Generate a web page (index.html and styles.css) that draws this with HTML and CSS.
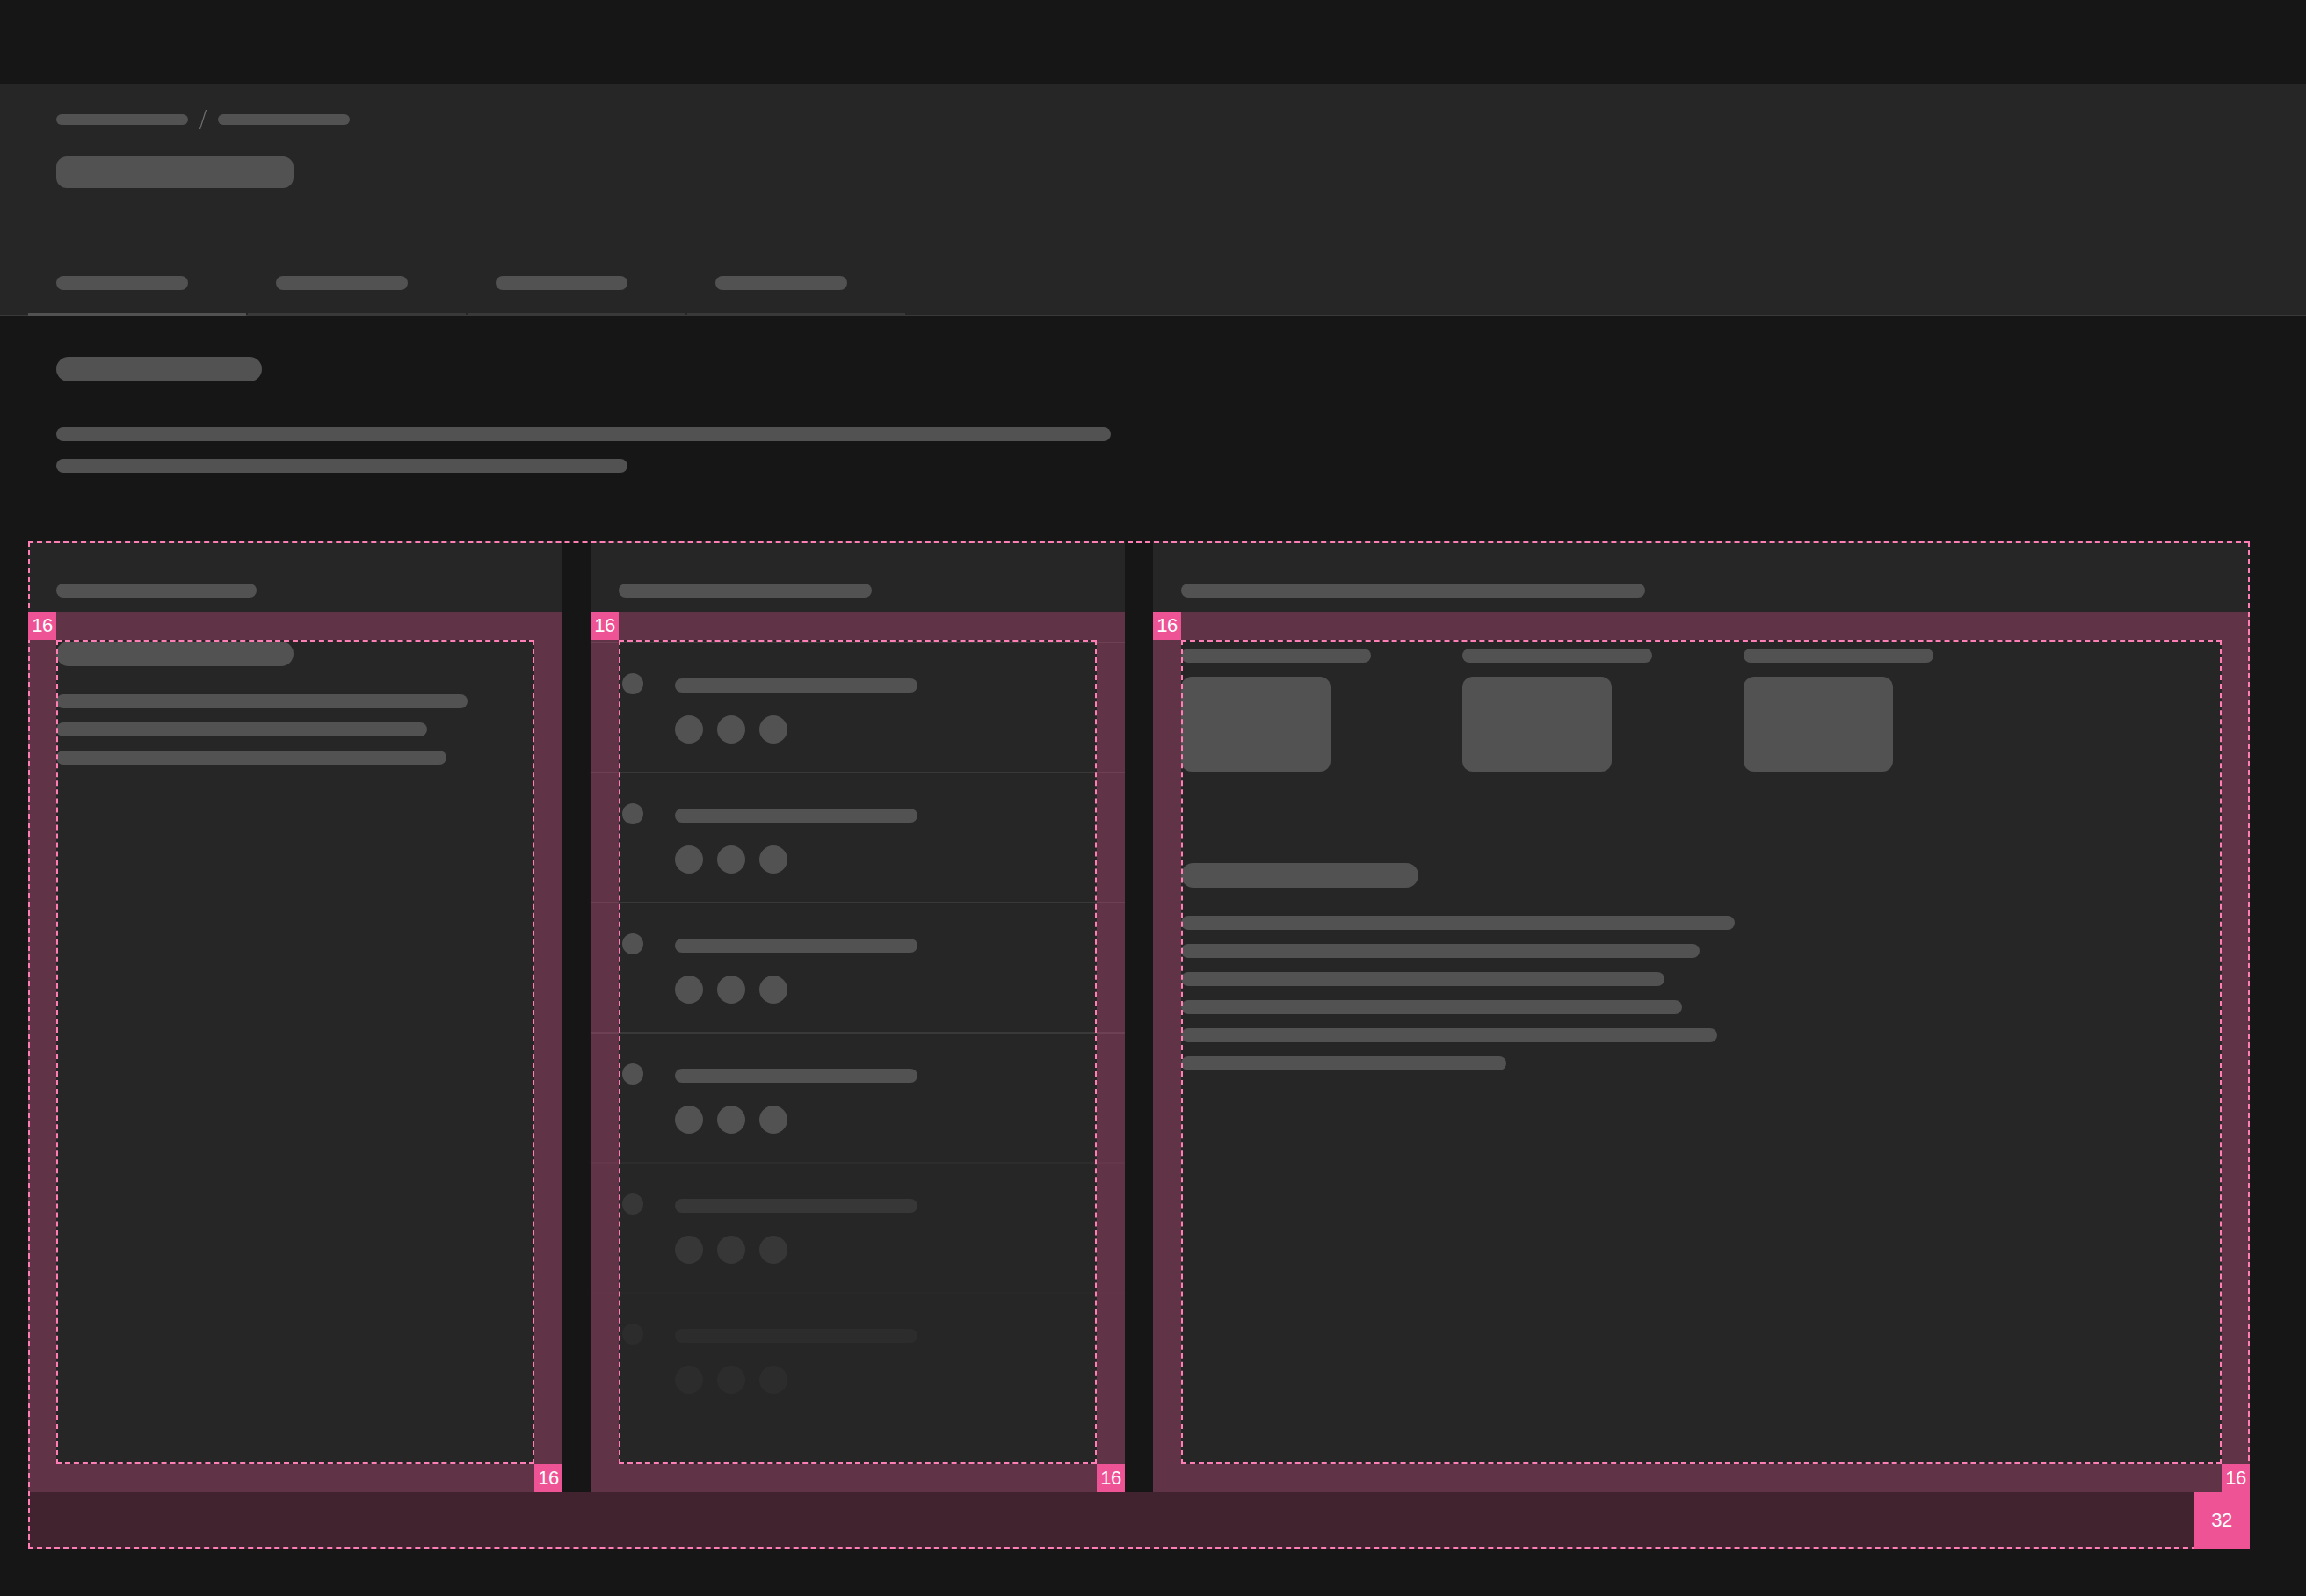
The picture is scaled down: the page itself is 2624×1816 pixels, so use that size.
FILE: index.html
```html
<!DOCTYPE html>
<html lang="en">
<head>
<meta charset="utf-8">
<title>Layout spacing</title>
<link rel="stylesheet" href="styles.css">
</head>
<body>
<div class="topbar"></div>
<header class="page-header">
  <nav class="crumbs">
    <span class="sk sk-crumb"></span>
    <svg class="slash" width="8" height="22" viewBox="0 0 8 22"><line x1="7.5" y1="0" x2="0.5" y2="22" stroke="#6f6f6f" stroke-width="1.2"/></svg>
    <span class="sk sk-crumb"></span>
  </nav>
  <div class="sk sk-page-title"></div>
  <div class="tabs">
    <div class="tab active"><span class="sk sk-tab"></span></div>
    <div class="tab"><span class="sk sk-tab"></span></div>
    <div class="tab"><span class="sk sk-tab"></span></div>
    <div class="tab"><span class="sk sk-tab"></span></div>
  </div>
</header>
<main class="main">
  <section class="intro">
    <div class="sk sk-h2"></div>
    <div class="sk sk-line w1200 intro-first"></div>
    <div class="sk sk-line w650 intro-second"></div>
  </section>

  <section class="layout">
    <div class="panel">
      <div class="panel-head"><span class="sk sk-head w228"></span></div>
      <div class="panel-body">
        <div class="sk sk-h3 first-title"></div>
        <div class="lines">
          <div class="sk sk-line w468"></div>
          <div class="sk sk-line w422"></div>
          <div class="sk sk-line w444"></div>
        </div>
        <div class="pad-overlay"></div>
        <div class="content-outline"></div>
        <span class="badge badge-tl">16</span>
        <span class="badge badge-br">16</span>
      </div>
    </div>

    <div class="panel">
      <div class="panel-head"><span class="sk sk-head w288"></span></div>
      <div class="panel-body">
        <ul class="list">
          <li class="row"><span class="row-icon"><span class="dot"></span></span><div class="row-body"><div class="sk sk-line w276"></div><div class="avatars"><span class="avatar"></span><span class="avatar"></span><span class="avatar"></span></div></div></li>
          <li class="row"><span class="row-icon"><span class="dot"></span></span><div class="row-body"><div class="sk sk-line w276"></div><div class="avatars"><span class="avatar"></span><span class="avatar"></span><span class="avatar"></span></div></div></li>
          <li class="row"><span class="row-icon"><span class="dot"></span></span><div class="row-body"><div class="sk sk-line w276"></div><div class="avatars"><span class="avatar"></span><span class="avatar"></span><span class="avatar"></span></div></div></li>
          <li class="row"><span class="row-icon"><span class="dot"></span></span><div class="row-body"><div class="sk sk-line w276"></div><div class="avatars"><span class="avatar"></span><span class="avatar"></span><span class="avatar"></span></div></div></li>
          <li class="row fade-1"><span class="row-icon"><span class="dot"></span></span><div class="row-body"><div class="sk sk-line w276"></div><div class="avatars"><span class="avatar"></span><span class="avatar"></span><span class="avatar"></span></div></div></li>
          <li class="row fade-2"><span class="row-icon"><span class="dot"></span></span><div class="row-body"><div class="sk sk-line w276"></div><div class="avatars"><span class="avatar"></span><span class="avatar"></span><span class="avatar"></span></div></div></li>
        </ul>
        <div class="pad-overlay"></div>
        <div class="content-outline"></div>
        <span class="badge badge-tl">16</span>
        <span class="badge badge-br">16</span>
      </div>
    </div>

    <div class="panel">
      <div class="panel-head"><span class="sk sk-head w528"></span></div>
      <div class="panel-body">
        <div class="tiles">
          <div class="tile"><div class="sk sk-tile-label"></div><div class="tile-card"></div></div>
          <div class="tile"><div class="sk sk-tile-label"></div><div class="tile-card"></div></div>
          <div class="tile"><div class="sk sk-tile-label"></div><div class="tile-card"></div></div>
        </div>
        <div class="sk sk-h3 detail-title"></div>
        <div class="lines">
          <div class="sk sk-line w630"></div>
          <div class="sk sk-line w590"></div>
          <div class="sk sk-line w550"></div>
          <div class="sk sk-line w570"></div>
          <div class="sk sk-line w610"></div>
          <div class="sk sk-line w370"></div>
        </div>
        <div class="pad-overlay"></div>
        <div class="content-outline"></div>
        <span class="badge badge-tl">16</span>
        <span class="badge badge-br">16</span>
      </div>
    </div>

    <div class="layout-pad"><span class="badge badge-lg">32</span></div>
    <div class="layout-outline"></div>
  </section>
</main>
</body>
</html>
```

FILE: styles.css
```css
* { box-sizing: border-box; }

html, body {
  margin: 0;
  padding: 0;
  background: #161616;
  font-family: "Liberation Sans", Arial, sans-serif;
}

.topbar {
  height: 96px;
  background: #161616;
}

/* skeleton shapes */
.sk {
  display: block;
  background: #525252;
  border-radius: 8px;
}

.sk-line { height: 16px; }
.w1200 { width: 1200px; }
.w650 { width: 650px; }
.w468 { width: 468px; }
.w422 { width: 422px; }
.w444 { width: 444px; }
.w276 { width: 276px; }
.w630 { width: 630px; }
.w590 { width: 590px; }
.w550 { width: 550px; }
.w570 { width: 570px; }
.w610 { width: 610px; }
.w370 { width: 370px; }
.w228 { width: 228px; }
.w288 { width: 288px; }
.w528 { width: 528px; }

/* page header */
.page-header {
  background: #262626;
  padding: 29px 64px 0;
  height: 264px;
  box-shadow: inset 0 -2px 0 #393939;
}

.crumbs {
  display: flex;
  align-items: center;
  gap: 13px;
  height: 22px;
}

.sk-crumb {
  width: 150px;
  height: 12px;
  border-radius: 6px;
}

.slash { display: block; }

.sk-page-title {
  margin-top: 31px;
  width: 270px;
  height: 36px;
  border-radius: 12px;
}

.tabs {
  display: flex;
  gap: 2px;
  margin-top: 74px;
  margin-left: -32px;
}

.tab {
  width: 248px;
  height: 72px;
  padding: 26px 0 0 32px;
  border-bottom: 4px solid #393939;
}

.tab.active { border-bottom-color: #525252; }

.sk-tab {
  width: 150px;
  height: 16px;
}

/* main */
.main {
  padding: 0 64px 0 32px;
}

.intro {
  padding: 46px 0 0 32px;
}

.sk-h2 {
  width: 234px;
  height: 28px;
  border-radius: 14px;
}

.intro-first { margin-top: 52px; }
.intro-second { margin-top: 20px; }

/* spacing layout */
.layout {
  position: relative;
  margin-top: 78px;
  height: 1146px;
  padding-bottom: 64px;
  display: grid;
  grid-template-columns: 608px 608px 1fr;
  column-gap: 32px;
}

.panel {
  display: flex;
  flex-direction: column;
  background: #262626;
}

.panel-head {
  height: 80px;
  padding: 48px 32px 0;
}

.sk-head { height: 16px; }

.panel-body {
  position: relative;
  flex: 1;
  padding: 32px;
}

.pad-overlay {
  position: absolute;
  inset: 0;
  border: 32px solid rgba(238, 83, 150, 0.29);
  pointer-events: none;
}

.content-outline {
  position: absolute;
  inset: 32px;
  border: 2px dashed #ff7eb6;
  pointer-events: none;
}

.badge {
  position: absolute;
  width: 32px;
  height: 32px;
  background: #ee5396;
  color: #ffffff;
  font-size: 22px;
  line-height: 32px;
  text-align: center;
  letter-spacing: -0.5px;
  z-index: 3;
}

.badge-tl { top: 0; left: 0; }
.badge-br { bottom: 0; right: 0; }

.badge-lg {
  width: 64px;
  height: 64px;
  line-height: 64px;
  bottom: 0;
  right: 0;
}

/* column 1 */
.sk-h3 {
  width: 270px;
  height: 28px;
  border-radius: 14px;
}

.first-title { margin-top: 2px; }

.lines {
  display: flex;
  flex-direction: column;
  gap: 16px;
  margin-top: 32px;
}

/* column 2 */
.list {
  list-style: none;
  margin: 0 -32px;
  padding: 2px 0 0;
}

.row {
  display: flex;
  gap: 32px;
  padding: 40px 32px 32px;
  border-top: 2px solid #393939;
}

.row.fade-1 { opacity: 0.4; }
.row.fade-2 { opacity: 0.15; }

.row-icon {
  width: 32px;
  display: flex;
  justify-content: center;
}

.dot {
  width: 24px;
  height: 24px;
  margin-top: -6px;
  border-radius: 50%;
  background: #525252;
}

.avatars {
  display: flex;
  gap: 16px;
  margin-top: 26px;
}

.avatar {
  width: 32px;
  height: 32px;
  border-radius: 50%;
  background: #525252;
}

/* column 3 */
.tiles {
  display: flex;
  gap: 104px;
  padding-top: 10px;
}

.tile { width: 216px; }

.sk-tile-label { height: 16px; }

.tile-card {
  margin-top: 16px;
  width: 170px;
  height: 108px;
  border-radius: 12px;
  background: #525252;
}

.detail-title { margin-top: 104px; }

/* layout padding + outline */
.layout-pad {
  position: absolute;
  left: 0;
  right: 0;
  bottom: 0;
  height: 64px;
  background: rgba(238, 83, 150, 0.2);
}

.layout-outline {
  position: absolute;
  inset: 0;
  border: 2px dashed #ff7eb6;
  pointer-events: none;
  z-index: 2;
}
```
